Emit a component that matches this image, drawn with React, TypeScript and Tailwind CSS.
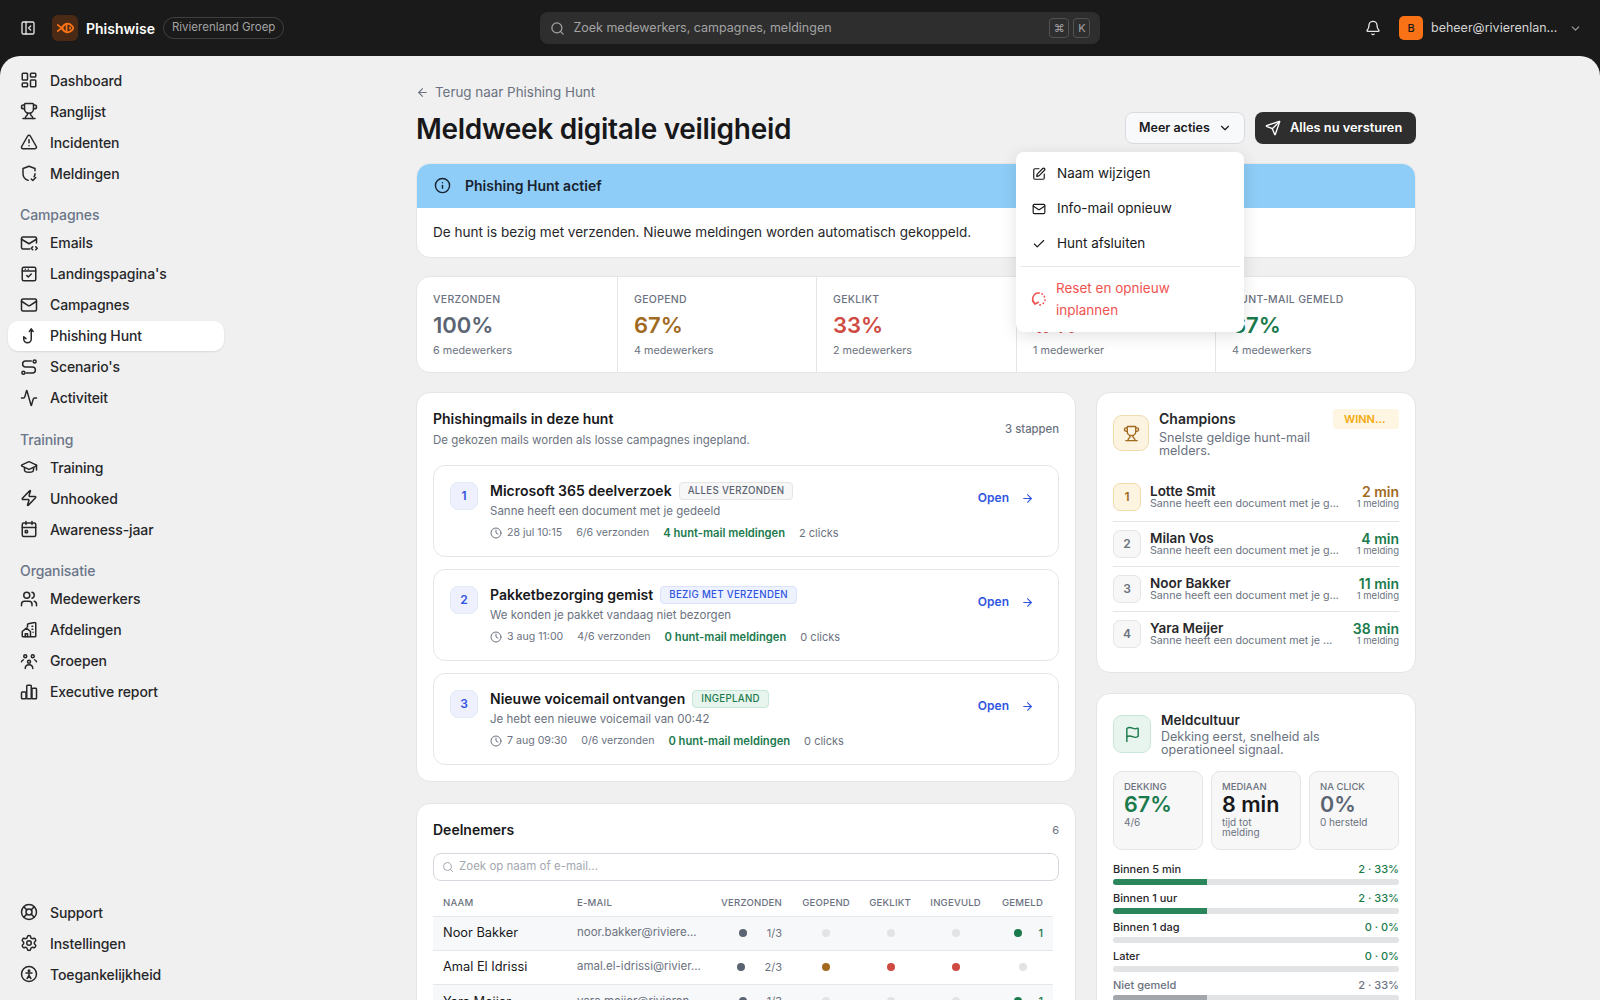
import {
  Activity,
  ArrowLeft,
  ArrowRight,
  Bell,
  Check,
  ChevronDown,
  Clock,
  Flag,
  GraduationCap,
  Info,
  LayoutDashboard,
  LifeBuoy,
  Mail,
  PanelLeftClose,
  Search,
  Send,
  Settings,
  SquarePen,
  TriangleAlert,
  Trophy,
  Users,
  Zap,
} from "lucide-react";
import type { ReactNode } from "react";

const svgProps = {
  width: 18,
  height: 18,
  viewBox: "0 0 24 24",
  fill: "none",
  stroke: "currentColor",
  strokeWidth: 2,
  strokeLinecap: "round" as const,
  strokeLinejoin: "round" as const,
};

const ShieldDash = () => (
  <svg {...svgProps}>
    <path d="M20 13c0 1.500-.4 2.800-1.200 4M11 21.800C7 20.500 4 17.500 4 13V6l8-3 8 3v3" />
    <path d="m15 20 2 2 4-4" />
  </svg>
);
const MailCode = () => (
  <svg {...svgProps}>
    <path d="M22 12V6a2 2 0 0 0-2-2H4a2 2 0 0 0-2 2v12a2 2 0 0 0 2 2h9" />
    <path d="m22 7-10 6L2 7" />
    <path d="m17 17-2 2 2 2M21 17l2 2-2 2" />
  </svg>
);
const PageCheck = () => (
  <svg {...svgProps}>
    <rect x="3" y="3" width="18" height="18" rx="2" />
    <path d="M3 8h18M7 5.500h.01M11 5.500h.01" />
    <path d="m9 14 2 2 4-4" />
  </svg>
);
const Hook = () => (
  <svg {...svgProps}>
    <path d="M15 4v12a5 5 0 0 1-10 0v-3l3 2.500" />
    <path d="m12.500 6 2.500-3.500L17.500 6" />
  </svg>
);
const RouteS = () => (
  <svg {...svgProps}>
    <circle cx="4.500" cy="19.500" r="2" />
    <circle cx="19.500" cy="4.500" r="2" />
    <path d="M8 20h8.500a4 4 0 0 0 0-8h-9a4 4 0 0 1 0-8H15" />
  </svg>
);
const CalendarDot = () => (
  <svg {...svgProps}>
    <rect x="3" y="4" width="18" height="18" rx="2" />
    <path d="M8 2v4M16 2v4M3 10h18" />
    <rect x="7" y="14" width="3" height="3" rx=".5" />
  </svg>
);
const BuildingHouse = () => (
  <svg {...svgProps}>
    <path d="M10 8V5a1.500 1.500 0 0 1 1-1.400l8.500-1.500A1.200 1.200 0 0 1 21 3v17a1 1 0 0 1-1 1h-5" />
    <path d="M3 20v-6l5.500-4.500L14 14v7H4a1 1 0 0 1-1-1Z" />
    <path d="M7 21v-4h3v4M16 7h1M16 11h1M17.500 15h.01" />
  </svg>
);
const Groups = () => (
  <svg {...svgProps}>
    <circle cx="7" cy="5.500" r="2" />
    <circle cx="17" cy="5.500" r="2" />
    <circle cx="12" cy="13" r="2" />
    <path d="M2 13c.3-1.300 1.200-2 2.500-2.500M22 13c-.3-1.300-1.200-2-2.500-2.500M7 22c0-3 2-5 5-5s5 2 5 5" />
  </svg>
);
const Bars = () => (
  <svg {...svgProps}>
    <rect x="2" y="12" width="6" height="9" rx="1" />
    <rect x="9" y="3" width="6" height="18" rx="1" />
    <rect x="16" y="7" width="6" height="14" rx="1" />
  </svg>
);
const CircleFigure = () => (
  <svg {...svgProps}>
    <circle cx="12" cy="12" r="10" />
    <circle cx="12" cy="7.500" r="1" />
    <path d="M8 10.500h8M12 11v3l-2.500 4M12 14l2.500 4" />
  </svg>
);
const ResetDashed = () => (
  <svg {...svgProps} width={16} height={16} strokeWidth={2.4}>
    <path d="M6 19A9 9 0 0 1 12.500 3" />
    <path d="M16.500 4.200l.6.4M20 8l.3.7M21 13.500v.7M18.800 18l-.5.5M14 20.800l-.7.2" />
    <path d="M2.500 14.500 6 19.500l5-2.500" />
  </svg>
);
const FishLogo = () => (
  <svg width="17" height="12" viewBox="0 0 24 16" fill="none" stroke="#f97316" strokeWidth="2.500" strokeLinecap="round">
    <path d="M6.500 8c2-3.500 5.500-6 8.500-6s7 2.500 8 6c-1 3.500-5 6-8 6s-6.500-2.500-8.500-6Z" />
    <path d="M1 3.500 9 10M1 12.500 9 6M13.500 4.500v7M18.500 7v2" />
  </svg>
);

type NavItem = { label: string; icon: ReactNode; active?: boolean };

const ic = { size: 18, strokeWidth: 2 };

const topNav: NavItem[] = [
  { label: "Dashboard", icon: <LayoutDashboard {...ic} /> },
  { label: "Ranglijst", icon: <Trophy {...ic} /> },
  { label: "Incidenten", icon: <TriangleAlert {...ic} /> },
  { label: "Meldingen", icon: <ShieldDash /> },
];
const campagneNav: NavItem[] = [
  { label: "Emails", icon: <MailCode /> },
  { label: "Landingspagina's", icon: <PageCheck /> },
  { label: "Campagnes", icon: <Mail {...ic} /> },
  { label: "Phishing Hunt", icon: <Hook />, active: true },
  { label: "Scenario's", icon: <RouteS /> },
  { label: "Activiteit", icon: <Activity {...ic} /> },
];
const trainingNav: NavItem[] = [
  { label: "Training", icon: <GraduationCap {...ic} /> },
  { label: "Unhooked", icon: <Zap {...ic} /> },
  { label: "Awareness-jaar", icon: <CalendarDot /> },
];
const orgNav: NavItem[] = [
  { label: "Medewerkers", icon: <Users {...ic} /> },
  { label: "Afdelingen", icon: <BuildingHouse /> },
  { label: "Groepen", icon: <Groups /> },
  { label: "Executive report", icon: <Bars /> },
];
const bottomNav: NavItem[] = [
  { label: "Support", icon: <LifeBuoy {...ic} /> },
  { label: "Instellingen", icon: <Settings {...ic} /> },
  { label: "Toegankelijkheid", icon: <CircleFigure /> },
];

function NavList({ items }: { items: NavItem[] }) {
  return (
    <div className="flex flex-col gap-px">
      {items.map((item) => (
        <div
          key={item.label}
          className={
            "flex h-[30px] items-center gap-[12px] rounded-[10px] pl-[12px] text-[14px] font-medium tracking-[-0.1px] text-[#27272a] " +
            (item.active ? "bg-white shadow-[0_1px_2px_rgba(0,0,0,0.1)]" : "")
          }
        >
          <span className="flex w-[18px] shrink-0 justify-center">{item.icon}</span>
          {item.label}
        </div>
      ))}
    </div>
  );
}

function NavGroup({ title, items }: { title: string; items: NavItem[] }) {
  return (
    <div className="mt-[15.500px]">
      <div className="mb-[2px] flex h-[22px] items-center pl-[12px] text-[14px] font-medium tracking-[-0.1px] text-[#6b7588]">
        {title}
      </div>
      <NavList items={items} />
    </div>
  );
}

function Sidebar() {
  return (
    <aside className="flex h-full w-[232px] shrink-0 flex-col pb-[11px] pl-[8px] pr-[8px] pt-[9px]">
      <NavList items={topNav} />
      <NavGroup title="Campagnes" items={campagneNav} />
      <NavGroup title="Training" items={trainingNav} />
      <NavGroup title="Organisatie" items={orgNav} />
      <div className="mt-auto">
        <NavList items={bottomNav} />
      </div>
    </aside>
  );
}

function Header() {
  return (
    <header className="relative flex h-[56px] shrink-0 items-center bg-[#1a1a1a] pl-[20px] pr-[18px] text-white">
      <PanelLeftClose size={16} className="text-[#e5e5e5]" />
      <div className="ml-[16px] flex h-[26px] w-[26px] items-center justify-center rounded-[6px] bg-[#4a2a14]">
        <FishLogo />
      </div>
      <span className="ml-[8px] text-[14px] font-semibold">Phishwise</span>
      <span className="ml-[8px] rounded-full border border-[#3f3f3f] px-[8px] py-[1px] text-[11.500px] text-[#a3a3a3]">
        Rivierenland Groep
      </span>
      <div className="ml-[256px] flex h-[32px] w-[560px] items-center rounded-[8px] bg-[#2e2e2e] pl-[10px] pr-[10px] text-[12.500px] text-[#a3a3a3]">
        <Search size={15} className="text-[#a3a3a3]" />
        <span className="ml-[8px]">Zoek medewerkers, campagnes, meldingen</span>
        <div className="ml-auto flex gap-[4px]">
          <span className="flex h-[20px] w-[20px] items-center justify-center rounded-[4px] border border-[#525252] text-[11px]">⌘</span>
          <span className="flex h-[20px] w-[17px] items-center justify-center rounded-[4px] border border-[#525252] text-[11px]">K</span>
        </div>
      </div>
      <Bell size={16} className="ml-auto text-[#e5e5e5]" />
      <div className="ml-[18px] flex h-[24px] w-[24px] items-center justify-center rounded-[5px] bg-[#f97316] text-[11px] font-medium text-[#1a1a1a]">
        B
      </div>
      <span className="ml-[8px] w-[130px] truncate text-[12.500px] text-[#d4d4d4]">beheer@rivierenland.nl</span>
      <ChevronDown size={13} className="ml-[8px] text-[#a3a3a3]" />
    </header>
  );
}

function ActionsMenu() {
  return (
    <div className="absolute left-[600px] top-[96px] z-10 w-[228px] rounded-[8px] bg-white p-[4px] pb-[6px] text-[13.500px] shadow-[0_4px_16px_rgba(0,0,0,0.12)]">
      <div className="flex h-[35px] items-center gap-[11px] px-[12px] text-[#18181b]">
        <SquarePen size={14} /> Naam wijzigen
      </div>
      <div className="flex h-[35px] items-center gap-[11px] px-[12px] text-[#18181b]">
        <Mail size={14} /> Info-mail opnieuw
      </div>
      <div className="flex h-[35px] items-center gap-[11px] px-[12px] text-[#18181b]">
        <Check size={14} /> Hunt afsluiten
      </div>
      <div className="my-[5px] h-px bg-[#e5e7eb]" />
      <div className="flex items-center gap-[9px] px-[11px] py-[5px] leading-[22px] text-[#ef5350]">
        <ResetDashed />
        <span>
          Reset en opnieuw
          <br />
          inplannen
        </span>
      </div>
    </div>
  );
}

const stats = [
  { label: "VERZONDEN", value: "100%", sub: "6 medewerkers", color: "text-[#5b6472]", w: "w-[200px]" },
  { label: "GEOPEND", value: "67%", sub: "4 medewerkers", color: "text-[#a16a1f]", w: "w-[199px]" },
  { label: "GEKLIKT", value: "33%", sub: "2 medewerkers", color: "text-[#cf4a42]", w: "w-[200px]" },
  { label: "INGEVULD", value: "17%", sub: "1 medewerker", color: "text-[#cf4a42]", w: "w-[199px]" },
  { label: "HUNT-MAIL GEMELD", value: "67%", sub: "4 medewerkers", color: "text-[#1a7a4c]", w: "flex-1" },
];

function StatStrip() {
  return (
    <div className="mt-[18px] flex h-[97px] rounded-[14px] border border-[#e5e5e5] bg-white">
      {stats.map((s, i) => (
        <div
          key={s.label}
          className={"flex flex-col px-[16px] pt-[15px] " + s.w + (i > 0 ? " border-l border-[#e5e5e5]" : "")}
        >
          <span className="text-[10.500px] font-medium tracking-[0.3px] text-[#6b7280]">{s.label}</span>
          <span className={"mt-[2px] text-[22px] font-semibold leading-[30px] " + s.color}>{s.value}</span>
          <span className="mt-[3px] text-[10.800px] text-[#6b7280]">{s.sub}</span>
        </div>
      ))}
    </div>
  );
}

const mails = [
  {
    n: 1,
    title: "Microsoft 365 deelverzoek",
    badge: "ALLES VERZONDEN",
    badgeClass: "border-[#e5e5e5] bg-[#f7f7f7] text-[#5b6472]",
    sub: "Sanne heeft een document met je gedeeld",
    date: "28 jul 10:15",
    sent: "6/6 verzonden",
    reports: "4 hunt-mail meldingen",
    clicks: "2 clicks",
  },
  {
    n: 2,
    title: "Pakketbezorging gemist",
    badge: "BEZIG MET VERZENDEN",
    badgeClass: "border-[#dbe2fb] bg-[#eef2fe] text-[#2f55e0]",
    sub: "We konden je pakket vandaag niet bezorgen",
    date: "3 aug 11:00",
    sent: "4/6 verzonden",
    reports: "0 hunt-mail meldingen",
    clicks: "0 clicks",
  },
  {
    n: 3,
    title: "Nieuwe voicemail ontvangen",
    badge: "INGEPLAND",
    badgeClass: "border-[#c6e7d5] bg-[#e8f5ee] text-[#1a7a4c]",
    sub: "Je hebt een nieuwe voicemail van 00:42",
    date: "7 aug 09:30",
    sent: "0/6 verzonden",
    reports: "0 hunt-mail meldingen",
    clicks: "0 clicks",
  },
];

function MailsCard() {
  return (
    <section className="rounded-[14px] border border-[#e5e5e5] bg-white px-[16px] pb-[16px] pt-[16px]">
      <div className="flex items-center justify-between">
        <div>
          <h2 className="text-[14px] font-semibold leading-[20px] text-[#18181b]">Phishingmails in deze hunt</h2>
          <p className="mt-[1px] text-[11.500px] leading-[20px] text-[#6b7280]">
            De gekozen mails worden als losse campagnes ingepland.
          </p>
        </div>
        <span className="text-[11.300px] font-medium text-[#6b7280]">3 stappen</span>
      </div>
      <div className="mt-[15px] flex flex-col gap-[12px]">
        {mails.map((m) => (
          <div key={m.n} className="flex h-[92px] rounded-[12px] border border-[#e5e5e5] px-[16px] pt-[16px]">
            <div className="flex h-[28px] w-[28px] shrink-0 items-center justify-center rounded-[8px] border border-[#e4e8f8] bg-[#eef1fd] text-[12px] font-semibold text-[#2f55e0]">
              {m.n}
            </div>
            <div className="ml-[12px] min-w-0 flex-1">
              <div className="flex items-center gap-[7px]">
                <span className="text-[14px] font-semibold leading-[18px] text-[#18181b]">{m.title}</span>
                <span className={"rounded-[4px] border px-[8px] text-[9.700px] font-medium leading-[16px] tracking-[0.3px] " + m.badgeClass}>
                  {m.badge}
                </span>
              </div>
              <p className="mt-[3px] text-[11.500px] leading-[16px] text-[#6b7280]">{m.sub}</p>
              <div className="mt-[6px] flex items-center gap-[14px] text-[10.600px] leading-[16px] text-[#6b7280]">
                <span className="flex items-center gap-[5px]">
                  <Clock size={12} />
                  {m.date}
                </span>
                <span>{m.sent}</span>
                <span className="text-[11.200px] font-semibold text-[#1a7a4c]">{m.reports}</span>
                <span className="text-[11px]">{m.clicks}</span>
              </div>
            </div>
            <div className="mt-[6px] flex h-[20px] items-center gap-[12px] pr-[8px] text-[12px] font-semibold text-[#2f55e0]">
              Open <ArrowRight size={13} />
            </div>
          </div>
        ))}
      </div>
    </section>
  );
}

const G = "bg-[#e2e3e5]";
const rows = [
  { name: "Noor Bakker", email: "noor.bakker@riviere...", sent: "1/3", d: [G, G, G], rep: "1" },
  { name: "Amal El Idrissi", email: "amal.el-idrissi@rivier...", sent: "2/3", d: ["bg-[#a16a1f]", "bg-[#cf4a42]", "bg-[#cf4a42]"], rep: "" },
  { name: "Yara Meijer", email: "yara.meijer@rivieren...", sent: "1/3", d: [G, G, G], rep: "1" },
];

function ParticipantsCard() {
  return (
    <section className="mt-[21px] rounded-[14px] border border-[#e5e5e5] bg-white px-[16px] pb-[16px] pt-[16px]">
      <div className="flex items-center justify-between">
        <h2 className="text-[14px] font-semibold leading-[20px] text-[#18181b]">Deelnemers</h2>
        <span className="text-[11px] text-[#6b7280]">6</span>
      </div>
      <div className="mt-[13px] flex h-[28px] items-center gap-[5px] rounded-[8px] border border-[#d4d7dd] pl-[8px] text-[11.500px] text-[#a3a8b0]">
        <Search size={12} />
        Zoek op naam of e-mail...
      </div>
      <table className="mt-[10px] w-[620px] table-fixed border-collapse">
        <thead>
          <tr className="h-[25px] text-left text-[9.600px] font-medium tracking-[0.2px] text-[#6b7280]">
            <th className="w-[144px] pl-[10px] font-medium">NAAM</th>
            <th className="w-[119px] font-medium">E-MAIL</th>
            <th className="w-[86px] text-right font-medium">VERZONDEN</th>
            <th className="w-[68px] text-right font-medium">GEOPEND</th>
            <th className="w-[61px] text-right font-medium">GEKLIKT</th>
            <th className="w-[70px] text-right font-medium">INGEVULD</th>
            <th className="w-[72px] pr-[10px] text-right font-medium">GEMELD</th>
          </tr>
        </thead>
        <tbody>
          {rows.map((r, i) => (
            <tr key={r.name} className={"h-[34px] border-t border-[#e5e7eb] " + (i % 2 === 0 ? "bg-[#f7f8fa]" : "")}>
              <td className="pl-[10px] text-[12.800px] text-[#18181b]">{r.name}</td>
              <td className="whitespace-nowrap text-[11.500px] text-[#6b7280]">{r.email}</td>
              <td>
                <div className="flex items-center justify-end gap-[20px] text-[11px] text-[#6b7280]">
                  <span className="h-[8px] w-[8px] rounded-full bg-[#5b6472]" />
                  {r.sent}
                </div>
              </td>
              {r.d.map((c, j) => (
                <td key={j}>
                  <div className={"mx-auto h-[8px] w-[8px] translate-x-[10px] rounded-full " + c} />
                </td>
              ))}
              <td className="pr-[10px]">
                <div className="flex items-center justify-end gap-[16px] text-[11px] font-medium text-[#1a7a4c]">
                  <span className={"h-[8px] w-[8px] rounded-full " + (r.rep ? "bg-[#1a7a4c]" : "mr-[16px] bg-[#e2e3e5]")} />
                  {r.rep}
                </div>
              </td>
            </tr>
          ))}
        </tbody>
      </table>
    </section>
  );
}

const champions = [
  { n: 1, name: "Lotte Smit", sub: "Sanne heeft een document met je g...", time: "2 min", top: true },
  { n: 2, name: "Milan Vos", sub: "Sanne heeft een document met je g...", time: "4 min" },
  { n: 3, name: "Noor Bakker", sub: "Sanne heeft een document met je g...", time: "11 min" },
  { n: 4, name: "Yara Meijer", sub: "Sanne heeft een document met je ...", time: "38 min" },
];

function ChampionsCard() {
  return (
    <section className="h-[281px] rounded-[14px] border border-[#e5e5e5] bg-white px-[16px] pt-[16px]">
      <div className="flex items-start">
        <div className="mt-[6px] flex h-[36px] w-[36px] shrink-0 items-center justify-center rounded-[9px] border border-[#f1dcae] bg-[#fdf3e1] text-[#a16a1f]">
          <Trophy size={17} />
        </div>
        <div className="ml-[10px] min-w-0 flex-1">
          <div className="text-[14px] font-semibold leading-[20px] text-[#27272a]">Champions</div>
          <div className="mt-[2px] w-[160px] text-[12.600px] leading-[13px] text-[#6b7280]">Snelste geldige hunt-mail melders.</div>
        </div>
        <span className="flex h-[20px] w-[66px] items-center rounded-[4px] bg-[#fef6e2] pl-[11px] text-[11px] font-semibold text-[#f5a90b]">
          WINN...
        </span>
      </div>
      <div className="mt-[26px] flex flex-col">
        {champions.map((c, i) => (
          <div key={c.n} className={"flex items-center " + (i > 0 ? "mt-[8px] border-t border-[#e5e5e5] pt-[8px]" : "pb-[2px]")}>
            <div
              className={
                "flex h-[28px] w-[28px] shrink-0 items-center justify-center rounded-[7px] border text-[12px] font-semibold " +
                (c.top ? "border-[#f1dcae] bg-[#fdf3e1] text-[#a16a1f]" : "border-[#e5e5e5] bg-[#f7f7f7] text-[#6b7280]")
              }
            >
              {c.n}
            </div>
            <div className="ml-[9px] w-[192px] min-w-0">
              <div className="text-[13.500px] font-semibold leading-[13px] text-[#27272a]">{c.name}</div>
              <div className="truncate text-[10.700px] leading-[11px] text-[#6b7280]">{c.sub}</div>
            </div>
            <div className="ml-auto text-right">
              <div className={"text-[14px] font-semibold leading-[14px] " + (c.top ? "text-[#a16a1f]" : "text-[#1a7a4c]")}>{c.time}</div>
              <div className="text-[9.500px] leading-[10px] text-[#6b7280]">1 melding</div>
            </div>
          </div>
        ))}
      </div>
    </section>
  );
}

const tiles = [
  { label: "DEKKING", value: "67%", sub: "4/6", color: "text-[#1a7a4c]" },
  { label: "MEDIAAN", value: "8 min", sub: "tijd tot melding", color: "text-[#18181b]" },
  { label: "NA CLICK", value: "0%", sub: "0 hersteld", color: "text-[#5b6472]" },
];

const bars = [
  { label: "Binnen 5 min", value: "2 · 33%", pct: 33, tone: "green" },
  { label: "Binnen 1 uur", value: "2 · 33%", pct: 33, tone: "green" },
  { label: "Binnen 1 dag", value: "0 · 0%", pct: 0, tone: "green" },
  { label: "Later", value: "0 · 0%", pct: 0, tone: "green" },
  { label: "Niet gemeld", value: "2 · 33%", pct: 33, tone: "gray" },
];

function CultureCard() {
  return (
    <section className="mt-[20px] rounded-[14px] border border-[#e5e5e5] bg-white px-[16px] pb-[16px] pt-[16px]">
      <div className="flex items-start">
        <div className="mt-[5px] flex h-[38px] w-[38px] shrink-0 items-center justify-center rounded-[9px] border border-[#c6e7d5] bg-[#e8f5ee] text-[#1a7a4c]">
          <Flag size={17} />
        </div>
        <div className="ml-[10px]">
          <div className="text-[13.500px] font-semibold leading-[20px] text-[#27272a]">Meldcultuur</div>
          <div className="w-[190px] text-[12.500px] leading-[13px] text-[#6b7280]">Dekking eerst, snelheid als operationeel signaal.</div>
        </div>
      </div>
      <div className="mt-[15px] grid h-[79px] grid-cols-3 gap-[8px]">
        {tiles.map((t) => (
          <div key={t.label} className="rounded-[9px] border border-[#e5e5e5] bg-[#f7f7f7] px-[10px] pt-[9px]">
            <div className="text-[9.500px] font-medium leading-[12px] text-[#6b7280]">{t.label}</div>
            <div className={"text-[21.500px] font-semibold leading-[23px] " + t.color}>{t.value}</div>
            <div className="mt-[1px] text-[10px] leading-[10px] text-[#6b7280]">{t.sub}</div>
          </div>
        ))}
      </div>
      <div className="mt-[10px] flex flex-col gap-[4px]">
        {bars.map((b) => (
          <div key={b.label}>
            <div className="flex h-[19px] items-center justify-between text-[11px] font-medium">
              <span className={b.tone === "gray" ? "text-[#6b7280]" : "text-[#27272a]"}>{b.label}</span>
              <span className={b.tone === "gray" ? "text-[#6b7280]" : "text-[#1a7a4c]"}>{b.value}</span>
            </div>
            <div className="h-[6px] overflow-hidden rounded-full bg-[#e2e3e5]">
              <div
                className={"h-full " + (b.tone === "gray" ? "bg-[#a3a6ab]" : "bg-[#2a855a]")}
                style={{ width: `${b.pct}%` }}
              />
            </div>
          </div>
        ))}
      </div>
    </section>
  );
}

export default function App() {
  return (
    <div className="flex h-[1000px] w-[1600px] flex-col overflow-hidden bg-[#1a1a1a] font-['Inter',sans-serif]">
      <Header />
      <div className="flex min-h-0 flex-1 rounded-t-[20px] bg-[#f0f0f0]">
        <Sidebar />
        <main className="relative ml-[184px] h-full w-[1000px] shrink-0 pt-[27px]">
          <div className="flex items-center gap-[6px] text-[13.400px] leading-[19px] text-[#6b7280]">
            <ArrowLeft size={13} />
            Terug naar Phishing Hunt
          </div>
          <div className="mt-[10px] flex h-[32px] items-start justify-between">
            <h1 className="pt-[1px] text-[28px] font-semibold leading-[32px] tracking-[-0.3px] text-[#18181b]">Meldweek digitale veiligheid</h1>
            <div className="flex gap-[10px]">
              <button className="flex h-[32px] w-[120px] items-center justify-between rounded-[8px] border border-[#d9dbe0] bg-[#f8f9fb] pl-[13px] pr-[12px] text-[12.500px] font-semibold text-[#18181b]">
                Meer acties <ChevronDown size={14} />
              </button>
              <button className="flex h-[32px] w-[161px] items-center gap-[9px] rounded-[8px] bg-[#2e2e2e] px-[10px] text-[12.800px] font-semibold text-white">
                <Send size={16} /> Alles nu versturen
              </button>
            </div>
          </div>
          <ActionsMenu />
          <div className="mt-[19px] overflow-hidden rounded-[14px] border border-[#e5e5e5] bg-white">
            <div className="flex h-[44px] items-center gap-[14px] bg-[#8ecdf7] px-[17px] pb-[2px] text-[14px] font-semibold text-[#18222e]">
              <Info size={17} />
              Phishing Hunt actief
            </div>
            <p className="flex h-[49px] items-center px-[16px] text-[13.550px] text-[#27272a]">
              De hunt is bezig met verzenden. Nieuwe meldingen worden automatisch gekoppeld.
            </p>
          </div>
          <StatStrip />
          <div className="mt-[19px] flex items-start gap-[20px]">
            <div className="w-[660px] shrink-0">
              <MailsCard />
              <ParticipantsCard />
            </div>
            <div className="min-w-0 flex-1">
              <ChampionsCard />
              <CultureCard />
            </div>
          </div>
        </main>
      </div>
    </div>
  );
}
